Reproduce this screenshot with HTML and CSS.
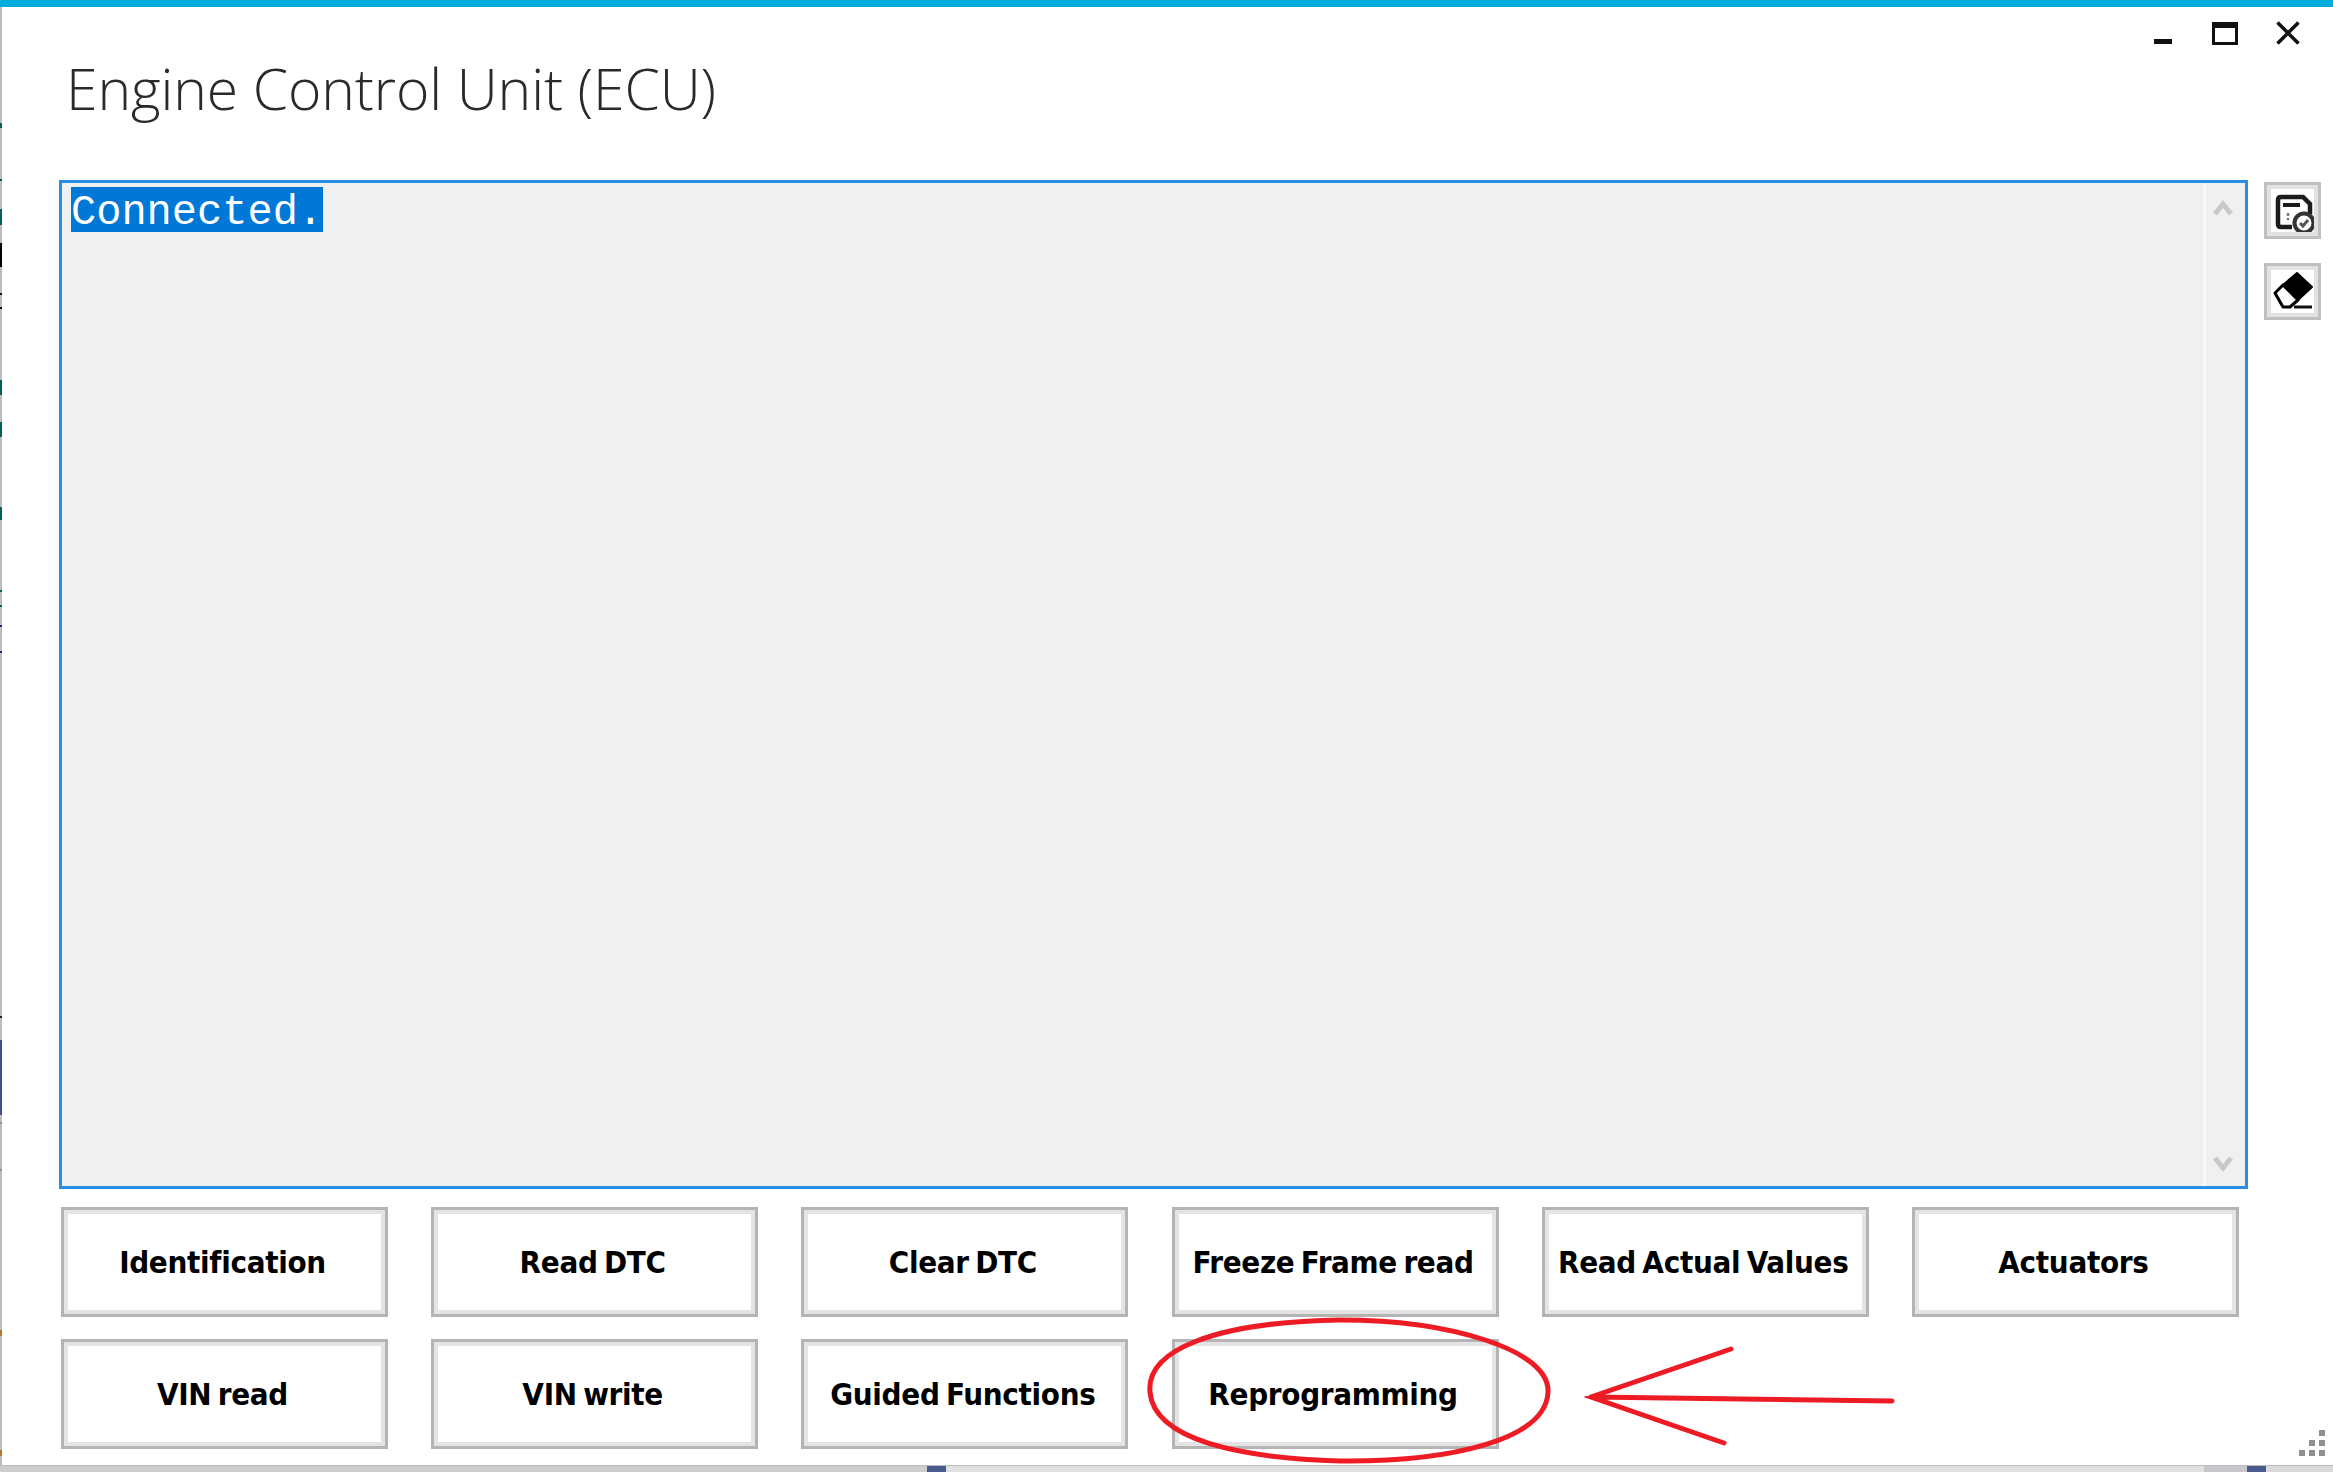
FILE: index.html
```html
<!DOCTYPE html>
<html lang="en">
<head>
<meta charset="utf-8">
<title>Engine Control Unit (ECU)</title>
<link rel="stylesheet" href="styles.css">
</head>
<body>
<div class="window">
  <div class="accent"></div>
  <div class="window-controls">
    <svg class="ctl" width="24" height="24" viewBox="0 0 24 24"><rect x="4" y="18" width="18" height="5" fill="#111"/></svg>
    <svg class="ctl" width="26" height="24" viewBox="0 0 26 24"><path d="M1.500 2.500h23v20h-23z" fill="none" stroke="#111" stroke-width="3"/><rect x="1" y="1" width="24" height="6" fill="#111"/></svg>
    <svg class="ctl" width="24" height="24" viewBox="0 0 24 24"><path d="M1.500 1.500l21 21M22.500 1.500l-21 21" fill="none" stroke="#111" stroke-width="3.500"/></svg>
  </div>
  <h1 class="title">Engine Control Unit (ECU)</h1>
  <div class="workspace">
    <div class="console">
      <div class="console-text"><span class="selected">Connected.</span></div>
      <div class="scrollbar">
        <svg width="20" height="16" viewBox="0 0 20 16"><path d="M2 14l8-10 8 10" fill="none" stroke="#c8c8c8" stroke-width="5"/></svg>
        <svg width="20" height="16" viewBox="0 0 20 16"><path d="M2 2l8 10 8-10" fill="none" stroke="#c8c8c8" stroke-width="5"/></svg>
      </div>
    </div>
    <div class="side-tools">
      <div class="tool">
        <svg width="51" height="51" viewBox="0 0 51 51"><path d="M25 42H14q-3 0-3-3V15q0-3 3-3H36l7 7v10" fill="none" stroke="#1c1c1c" stroke-width="4.500"/><rect x="16" y="18" width="17" height="4" fill="#1c1c1c"/><path d="M21 28v3M21 33v2" stroke="#777" stroke-width="2.500"/><circle cx="37" cy="38" r="9.500" fill="#fff" stroke="#333" stroke-width="4"/><path d="M33 38l3 3 5-6" fill="none" stroke="#555" stroke-width="3"/></svg>
      </div>
      <div class="tool">
        <svg width="51" height="51" viewBox="0 0 51 51"><path d="M30 7L45 21 31 34 16 19z" fill="#000" stroke="#000" stroke-width="2" stroke-linejoin="round"/><path d="M8 27L16 19 31 34 23 41H16z" fill="#fff" stroke="#000" stroke-width="3" stroke-linejoin="round"/><path d="M27 41H45" stroke="#111" stroke-width="3"/></svg>
      </div>
    </div>
  </div>
  <div class="actions">
    <button class="action">Identification</button>
    <button class="action">Read DTC</button>
    <button class="action">Clear DTC</button>
    <button class="action">Freeze Frame read</button>
    <button class="action">Read Actual Values</button>
    <button class="action">Actuators</button>
    <button class="action">VIN read</button>
    <button class="action">VIN write</button>
    <button class="action">Guided Functions</button>
    <button class="action">Reprogramming</button>
  </div>
  <div class="grip"><i></i><i></i><i></i><i></i><i></i><i></i></div>
</div>
<div class="taskstrip"><span class="seg seg-a"></span><span class="seg seg-b"></span><span class="seg seg-c"></span><span class="seg seg-d"></span><span class="seg seg-b"></span></div>
<svg class="markup" width="2333" height="1472" viewBox="0 0 2333 1472">
  <path class="mark-ink" d="M1150 1392C1146 1350 1215 1322 1340 1320C1450 1320 1550 1350 1548 1392C1546 1440 1450 1462 1340 1461C1240 1458 1154 1440 1150 1392Z"/>
  <path class="mark-ink" d="M1892 1401L1591 1397M1731 1349L1591 1397L1724 1443"/>
</svg>
</body>
</html>
```
FILE: styles.css
```css
html, body { margin: 0; padding: 0; }
body { width: 2333px; height: 1472px; overflow: hidden; position: relative; background: #fff; font-family: "DejaVu Sans", sans-serif; }
.window {
  height: 1465px; box-sizing: border-box; padding-left: 2px; position: relative; display: flex; flex-direction: column;
  background: #fff linear-gradient(to bottom,
    #bdbdbd 0 123px, #00605a 123px 128px, #bdbdbd 128px 179px, #00605a 179px 181px,
    #bdbdbd 181px 209px, #00605a 209px 225px, #bdbdbd 225px 243px, #000 243px 267px,
    #bdbdbd 267px 293px, #111 293px 295px, #bdbdbd 295px 307px, #111 307px 309px,
    #bdbdbd 309px 380px, #00605a 380px 395px, #bdbdbd 395px 422px, #00605a 422px 437px,
    #bdbdbd 437px 507px, #00605a 507px 520px, #bdbdbd 520px 590px, #00605a 590px 592px,
    #bdbdbd 592px 605px, #00605a 605px 607px, #bdbdbd 607px 625px, #1a2a70 625px 627px,
    #bdbdbd 627px 651px, #1a2a70 651px 653px, #bdbdbd 653px 1016px, #222 1016px 1018px,
    #bdbdbd 1018px 1040px, #3a5090 1040px 1115px, #bdbdbd 1115px 1122px, #8a90b0 1122px 1124px,
    #bdbdbd 1124px 1169px, #8a90b0 1169px 1171px, #bdbdbd 1171px 1330px, #b87a20 1330px 1336px,
    #bdbdbd 1336px 1450px, #b87a20 1450px 1456px, #bdbdbd 1456px) no-repeat 0 0 / 2px 100%;
}
.accent { height: 7px; background: #00addc; margin-left: -2px; }
.window-controls { position: absolute; top: 21px; right: 33px; display: flex; align-items: flex-start; gap: 38px; }
.title { margin: 0; height: 173px; padding: 36px 0 0 64px; box-sizing: border-box; font-family: "Open Sans", sans-serif; font-weight: 300; font-size: 57px; line-height: 90px; letter-spacing: -0.1px; color: #2a2a2a; }
.workspace { display: flex; align-items: flex-start; padding-left: 57px; }
.console { width: 2189px; height: 1009px; box-sizing: border-box; border: 3px solid #2b8ee6; background: #f0f0f0; display: flex; }
.console-text { flex: 1; padding: 4px 0 0 9px; font-family: "Liberation Mono", monospace; font-size: 42px; line-height: 45px; color: #fff; }
.selected { display: inline-block; background: #0078d7; height: 41px; padding-top: 4px; }
.scrollbar { padding: 17px 6px 14px 0; border-left: 3px solid #f8f8f8; width: 33px; display: flex; flex-direction: column; justify-content: space-between; align-items: center; }
.side-tools { display: flex; flex-direction: column; gap: 24px; margin-left: 16px; padding-top: 2px; }
.tool { width: 57px; height: 57px; box-sizing: border-box; border: 3px solid #c0c0c0; outline: 4px solid #e2e2e2; outline-offset: -7px; background: #fff; display: flex; align-items: center; justify-content: center; }
.actions { display: grid; grid-template-columns: repeat(6, 327px); column-gap: 43.2px; row-gap: 22px; padding: 18px 0 0 59px; }
.action { width: 327px; height: 110px; padding: 0 4px 0 0; box-sizing: border-box; border: 3px solid #b4b4b4; background: #fff; box-shadow: inset 0 0 0 4px #e4e4e4; font-family: "DejaVu Sans", sans-serif; font-stretch: condensed; font-weight: 700; font-size: 31px; letter-spacing: -0.3px; word-spacing: -3px; white-space: nowrap; color: #000; }
.grip { position: absolute; right: 8px; bottom: 9px; width: 26px; height: 26px; display: grid; grid-template-columns: repeat(3, 6px); grid-template-rows: repeat(3, 6px); gap: 4px; }
.grip i { background: #8f8f8f; }
.grip i:nth-child(1) { grid-column: 3; grid-row: 1; }
.grip i:nth-child(2) { grid-column: 2; grid-row: 2; }
.grip i:nth-child(3) { grid-column: 3; grid-row: 2; }
.grip i:nth-child(4) { grid-column: 1; grid-row: 3; }
.grip i:nth-child(5) { grid-column: 2; grid-row: 3; }
.grip i:nth-child(6) { grid-column: 3; grid-row: 3; }
.taskstrip { height: 7px; background: #dadada; display: flex; border-top: 1px solid #bcbcbc; box-sizing: border-box; }
.seg { display: block; height: 6px; }
.seg-a { width: 927px; background: #cdcdcd; }
.seg-b { width: 19px; background: #4a5a8c; }
.seg-c { width: 1258px; background: #e0e0e0; }
.seg-d { width: 43px; background: #c8c8cc; }
.markup { position: absolute; left: 0; top: 0; pointer-events: none; }
.mark-ink { fill: none; stroke: #ed1c24; stroke-width: 5; stroke-linecap: round; }
```
